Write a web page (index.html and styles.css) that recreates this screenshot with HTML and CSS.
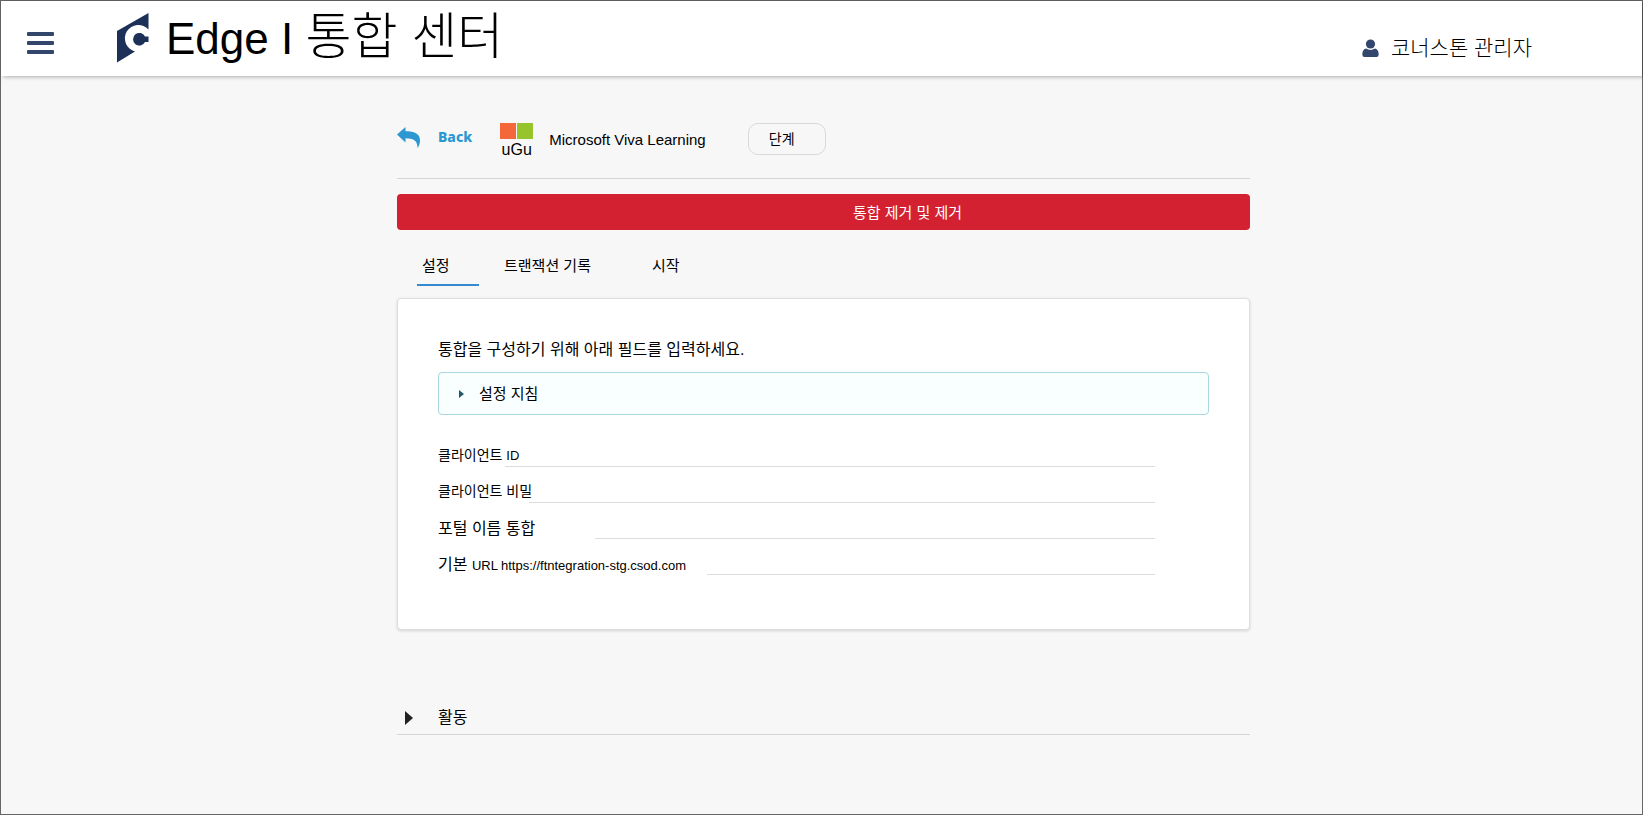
FILE: index.html
```html
<!DOCTYPE html>
<html lang="ko">
<head>
<meta charset="utf-8">
<meta name="viewport" content="width=device-width, initial-scale=1">
<title>Edge I 통합 센터</title>
<link rel="stylesheet" href="styles.css">
</head>
<body>
<div class="page">
  <header class="topbar">
    <button class="menu" type="button" aria-label="menu">
      <svg width="27" height="22" viewBox="0 0 27 22" fill="#33466b"><rect width="27" height="4" rx="1"/><rect y="9" width="27" height="4" rx="1"/><rect y="18" width="27" height="4" rx="1"/></svg>
    </button>
    <svg class="brand" width="32" height="50" viewBox="0 0 32 50" aria-hidden="true">
      <path fill="#1d3158" d="M0 18 31.500 0V16.500A13.500 13.500 0 1 0 18 38.500L0 49.500Z"/>
      <path fill="#1d3158" d="M31.500 23.500H28A6.300 6.300 0 1 0 28 29H31.500Z"/>
    </svg>
    <h1 class="title"><span class="title-name">Edge I </span>통합 센터</h1>
    <div class="user">
      <svg width="17" height="18" viewBox="0 0 17 18" fill="#33466b" aria-hidden="true"><circle cx="8.500" cy="5" r="4.600"/><path d="M4 9.500Q8.500 12.300 13 9.500 16.700 10.500 16.700 15.500 16.500 18 14.500 18H2.500Q.5 18 .3 15.500 .3 10.500 4 9.500Z"/></svg>
      <span>코너스톤 관리자</span>
    </div>
  </header>

  <main class="content">
    <div class="heading">
      <a class="back" href="#">
        <svg width="24" height="22" viewBox="0 0 24 22" fill="#2c97d1" aria-hidden="true"><path d="M0 7.500 8.500 0V4.300C17 4.300 23 6.500 23 13.500 23 16.500 22 19 20.500 21 20.500 14 17 11.300 8.500 11.300V15.500Z"/></svg>
        <span>Back</span>
      </a>
      <div class="product">
        <svg width="33" height="16" viewBox="0 0 33 16" aria-hidden="true"><rect width="16" height="16" fill="#f4673b"/><rect x="17" width="16" height="16" fill="#97c42b"/></svg>
        <span>uGu</span>
      </div>
      <h2 class="product-name">Microsoft Viva Learning</h2>
      <button class="stage" type="button">단계</button>
    </div>

    <button class="remove" type="button">통합 제거 및 제거</button>

    <nav class="tabs">
      <a class="tab tab-active" href="#">설정</a>
      <a class="tab tab-wide" href="#">트랜잭션 기록</a>
      <a class="tab" href="#">시작</a>
    </nav>

    <form class="card">
      <p class="intro">통합을 구성하기 위해 아래 필드를 입력하세요.</p>
      <button class="guide" type="button">
        <svg width="5" height="8" viewBox="0 0 5 8" fill="#205a6b" aria-hidden="true"><path d="M0 0 5 4 0 8Z"/></svg>
        <span>설정 지침</span>
      </button>
      <div class="fields">
        <div class="field">
          <label class="label-id" for="client-id">클라이언트 <span class="latin">ID</span></label>
          <input id="client-id" type="text">
        </div>
        <div class="field">
          <label class="label-secret" for="client-secret">클라이언트 비밀</label>
          <input id="client-secret" type="text">
        </div>
        <div class="field">
          <label class="label-portal" for="portal">포털 이름 통합</label>
          <input id="portal" type="text">
        </div>
        <div class="field">
          <label class="label-url" for="base-url">기본 <span class="latin">URL https://ftntegration-stg.csod.com</span></label>
          <input id="base-url" type="text">
        </div>
      </div>
    </form>

    <button class="activity" type="button">
      <svg width="8" height="14" viewBox="0 0 8 14" fill="#222" aria-hidden="true"><path d="M0 0 8 7 0 14Z"/></svg>
      <span>활동</span>
    </button>
  </main>
</div>
</body>
</html>
```

FILE: styles.css
```css
* { box-sizing: border-box; }

body {
  margin: 0;
  font-family: "Liberation Sans", "Noto Sans CJK KR", sans-serif;
  font-size: 15px;
  line-height: 20px;
  color: #000;
}

button {
  font: inherit;
  color: inherit;
  background: none;
  border: 0;
  padding: 0;
  cursor: pointer;
}

a { color: inherit; text-decoration: none; }
svg { display: block; flex: none; }

.page {
  min-height: 100vh;
  border: 1px solid #666;
  background: #f7f7f7;
}

.topbar {
  display: flex;
  align-items: flex-start;
  height: 75px;
  padding: 0 110px 0 26px;
  background: #fff;
  box-shadow: 2px 1px 4px rgba(0, 0, 0, 0.3);
}

.menu { margin-top: 31px; }
.brand { margin: 12px 0 0 63px; }

.title {
  margin: 8px 0 0 17px;
  font-size: 50px;
  font-weight: 300;
  line-height: 56px;
  white-space: nowrap;
}

.title-name { font-size: 44px; }

.user {
  display: flex;
  align-items: center;
  gap: 12px;
  margin: 33px 0 0 auto;
  font-size: 21px;
  font-weight: 300;
  line-height: 28px;
  white-space: nowrap;
}

.content {
  max-width: 857px;
  margin: 0 auto;
  padding-left: 4px;
}

.heading {
  display: flex;
  align-items: flex-start;
  height: 103px;
  padding-top: 47px;
  border-bottom: 1px solid #d6d6d6;
}

.back {
  display: flex;
  gap: 17px;
  padding-top: 4px;
  font-family: "Noto Sans", sans-serif;
  font-size: 14px;
  font-weight: 800;
  color: #2c97d1;
}

.product {
  display: flex;
  flex-direction: column;
  align-items: center;
  margin-left: 28px;
  font-size: 16px;
}

.product span { margin-top: 1px; }

.product-name {
  margin: 7px 0 0 16px;
  font-size: 15px;
  font-weight: 400;
  white-space: nowrap;
}

.stage {
  width: 78px;
  height: 32px;
  margin-left: 42px;
  padding-right: 10px;
  border: 1px solid #d9d9d9;
  border-radius: 10px;
  font-size: 14px;
}

.remove {
  display: block;
  width: 100%;
  height: 36px;
  margin-top: 15px;
  padding: 2px 0 0 168px;
  border-radius: 4px;
  background: #d42131;
  color: #fff;
}

.tabs {
  display: flex;
  gap: 20px;
  margin: 19px 0 12px 20px;
}

.tab {
  min-width: 62px;
  height: 37px;
  padding: 7px 5px 0;
  border-bottom: 2px solid transparent;
}

.tab-active { border-color: #3489cf; }
.tab-wide { width: 128px; }

.card {
  padding: 41px 40px 54px;
  border: 1px solid #dedede;
  border-radius: 4px;
  background: #fff;
  box-shadow: 0 1px 3px rgba(0, 0, 0, 0.15);
}

.intro {
  margin: 0 0 12px;
  font-size: 16px;
}

.guide {
  display: flex;
  align-items: center;
  gap: 15px;
  width: 100%;
  height: 43px;
  padding: 1px 0 0 20px;
  border: 1px solid #a9d6e0;
  border-radius: 4px;
  background: #f9ffff;
}

.fields {
  display: grid;
  gap: 12px;
  margin: 28px 54px 0 0;
}

.field { display: flex; height: 24px; }

.field label {
  flex: none;
  padding-top: 2px;
  font-size: 14px;
  white-space: nowrap;
}

.field .latin { font-size: 13px; }
.field .label-id { width: 67px; }
.field .label-secret { width: 91px; }

.field .label-portal,
.field .label-url {
  padding-top: 4px;
  font-size: 16px;
}

.field .label-portal { width: 157px; }
.field .label-url { width: 269px; }

.field input {
  flex: 1;
  min-width: 0;
  border: 0;
  border-bottom: 1px solid #dcdcdc;
  background: transparent;
  font: inherit;
}

.activity {
  display: flex;
  align-items: center;
  gap: 25px;
  width: 100%;
  margin-top: 78px;
  padding: 0 0 6px 8px;
  border-bottom: 1px solid #d6d6d6;
  font-size: 16px;
}
```
